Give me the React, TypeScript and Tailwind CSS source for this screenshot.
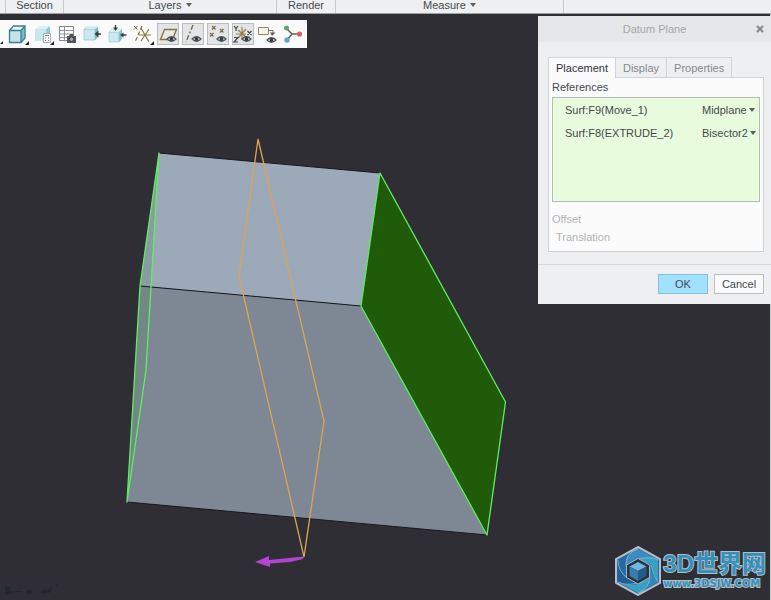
import React, { useState } from "react";
import clsx from "clsx";

const tabs = ["Placement", "Display", "Properties"];

const references = [
  { id: "ref-1", name: "Surf:F9(Move_1)", constraint: "Midplane", options: ["Midplane", "Through", "Offset", "Parallel"] },
  { id: "ref-2", name: "Surf:F8(EXTRUDE_2)", constraint: "Bisector2", options: ["Bisector1", "Bisector2"] },
];

function Caret() {
  return (
    <svg viewBox="0 0 6 4" className="pointer-events-none h-1 w-1.5 shrink-0" aria-hidden="true">
      <path d="M0 0h6L3 4z" fill="#5b5f63" />
    </svg>
  );
}

function RibbonGroup({ label, menu, className }: { label: string; menu?: boolean; className: string }) {
  return (
    <button type="button" className={clsx("flex h-full items-center justify-center gap-1 border-r border-[#c6c8cb] pb-1", className)}>
      {label}
      {menu && <Caret />}
    </button>
  );
}

function Eye({ x = 10, y = 13 }: { x?: number; y?: number }) {
  return (
    <g transform={`translate(${x} ${y})`}>
      <path d="M0 3Q4.500 -1.500 9 3Q4.500 7.500 0 3z" fill="#d9dcdd" stroke="#50565a" strokeWidth="1.200" />
      <circle cx="4.500" cy="3" r="1.900" fill="#33393d" />
    </g>
  );
}

function MenuTick() {
  return <path d="M22 18v4h-4z" fill="#222" />;
}

const tools = [
  {
    label: "Display style",
    art: (
      <>
        <path d="M14 7.500L18 3v12l-4 4.500z" fill="#75bdcb" />
        <path d="M2.500 7.500H14v12H2.500z" fill="#c4e4ea" />
        <path d="M2.500 7.500L6.500 3H18l-4 4.500z" fill="#e6f6f8" />
        <path d="M2.500 7.500H14v12H2.500zM2.500 7.500L6.500 3H18v12l-4 4.500M14 7.500L18 3" fill="none" stroke="#37808d" strokeWidth="1.300" />
        <MenuTick />
      </>
    ),
  },
  {
    label: "Saved orientations",
    art: (
      <>
        <path d="M14 6l4-3v11l-4 4z" fill="#90cad4" />
        <path d="M3 6h11v12H3z" fill="#c8e8ed" />
        <path d="M3 6l4-3h11l-4 3z" fill="#def2f5" />
        <path d="M11.500 10.500h7v9h-7z" fill="#fafafa" stroke="#92989c" strokeWidth=".8" />
        <path d="M13 12.500h4M13 15h1M16 15h1M13 17.500h1M16 17.500h1" stroke="#777d81" />
        <MenuTick />
      </>
    ),
  },
  {
    label: "View manager",
    art: (
      <>
        <path d="M2.500 3.500h14v14h-14z" fill="#fff" stroke="#82888b" />
        <path d="M2.500 7.500h14M2.500 11h14M2.500 14.500h14M7.500 3.500v14" stroke="#8f9497" fill="none" />
        <path d="M10 13h2l1-2h3l1 2h2v7h-9z" fill="#53585c" />
        <circle cx="14.500" cy="16.200" r="2.300" fill="#9da3a7" stroke="#202326" strokeWidth=".7" />
      </>
    ),
  },
  {
    label: "Refit section",
    art: (
      <>
        <path d="M13 6l3-2v10l-3 3z" fill="#79bcc8" />
        <path d="M2 6h11v11H2z" fill="#cbe9ee" stroke="#8dc5cf" strokeWidth=".7" />
        <path d="M2 6l3-2h11l-3 2z" fill="#e6f6f8" stroke="#8dc5cf" strokeWidth=".5" />
        <path d="M19 11h-4" fill="none" stroke="#3a3f42" strokeWidth="1.500" />
        <path d="M16.500 7.500v7L12.500 11z" fill="#3a3f42" />
      </>
    ),
  },
  {
    label: "Clip view",
    art: (
      <>
        <path d="M12 9l3-3v10l-3 3z" fill="#82c4cf" />
        <path d="M2 9h10v10H2z" fill="#cbe9ee" stroke="#97ccd5" strokeWidth=".7" />
        <path d="M2 9l3-3h10l-3 3z" fill="#e6f6f8" stroke="#97ccd5" strokeWidth=".5" />
        <path d="M8.500 2v3M19.500 12h-4" fill="none" stroke="#3a3f42" strokeWidth="1.300" />
        <path d="M6 4.500h5L8.500 8zM16.500 9.500v5L13 12z" fill="#3a3f42" />
      </>
    ),
  },
  {
    label: "Datum display filters",
    art: (
      <>
        <path d="M2 3l3.500 3.500M5.500 3L2 6.500" fill="none" stroke="#80704a" />
        <path d="M10 3L3 19" fill="none" stroke="#80704a" strokeWidth="1.200" strokeDasharray="4 2" />
        <path d="M7 12h12M9 5l8 14M17 6L9 18" fill="none" stroke="#8c7a4b" strokeWidth="1.200" />
        <MenuTick />
      </>
    ),
  },
  {
    label: "Plane display",
    pressed: true,
    art: (
      <>
        <path d="M7.500 6.500h12l-4 10h-12z" fill="#e9e7df" stroke="#84744e" strokeWidth="1.400" />
        <Eye />
      </>
    ),
  },
  {
    label: "Axis display",
    pressed: true,
    art: (
      <>
        <path d="M11 2L4 19" fill="none" stroke="#736a50" strokeWidth="1.400" strokeDasharray="5 2 2 2" />
        <Eye />
      </>
    ),
  },
  {
    label: "Point display",
    pressed: true,
    art: (
      <>
        <path d="M5 3l3.500 3.500M8.500 3L5 6.500M13 6l3.500 3.500M16.500 6L13 9.500M3 10l3.500 3.500M6.500 10L3 13.500" fill="none" stroke="#7c6b47" strokeWidth="1.200" />
        <Eye />
      </>
    ),
  },
  {
    label: "Coordinate system display",
    pressed: true,
    art: (
      <>
        <path d="M4 11h10M10 4v13M6 7l9 8M14 6l-8 9" fill="none" stroke="#967f4c" strokeWidth="1.200" />
        <path d="M2 3l2 2.500L6 3M4 5.500V8M15.500 8l4 4M19.500 8l-4 4M2 14.500h4L2 19h4" fill="none" stroke="#454a4d" strokeWidth="1.200" />
        <Eye />
      </>
    ),
  },
  {
    label: "Annotation display",
    art: (
      <>
        <path d="M1.500 4.500h10v7h-10z" fill="#faf5e4" stroke="#8d8672" />
        <path d="M11.500 7.500h4.500V10" fill="none" stroke="#6d7275" />
        <path d="M13 9.500h5.500l-3.500 3.500z" fill="#5b6063" />
        <Eye x={10} y={14} />
      </>
    ),
  },
  {
    label: "Spin center",
    art: (
      <>
        <path d="M4 5l6 6h8M10 11l-5 6" fill="none" stroke="#66634f" strokeWidth="1.500" />
        <circle cx="4.500" cy="5" r="2.500" fill="#5fa274" />
        <circle cx="17.500" cy="11" r="2.600" fill="#cf6263" />
        <circle cx="5" cy="17" r="2.700" fill="#62a5cc" />
      </>
    ),
  },
];

function Toolbar() {
  return (
    <div role="toolbar" aria-label="View tools" className="absolute top-1.5 left-0 flex h-7 items-center gap-[3px] bg-[#fafafa] pr-[3px] pl-[7px]">
      <svg viewBox="0 0 4 4" className="absolute bottom-1 left-0 h-[3px] w-[3px]" aria-hidden="true">
        <path d="M4 0v4H0z" fill="#222" />
      </svg>
      {tools.map((tool) => (
        <button
          key={tool.label}
          type="button"
          aria-label={tool.label}
          aria-pressed={tool.pressed}
          className={clsx("flex size-[22px] items-center justify-center", tool.pressed && "bg-[#e3e4e6] outline-1 -outline-offset-1 outline-[#babdc0]")}
        >
          <svg viewBox="0 0 22 22" className="size-[22px]" aria-hidden="true">
            {tool.art}
          </svg>
        </button>
      ))}
    </div>
  );
}

function Model() {
  return (
    <svg viewBox="0 0 770 586" className="w-full" role="img" aria-label="Model view">
      <path d="M159 139L380 159L361 292L140 272z" fill="#9ba9b9" />
      <path d="M140 272L361 292L487 521L127 488z" fill="#7e8894" />
      <path d="M380 159L505.500 388L487 521L361 292z" fill="#1f5b09" />
      <path d="M159 139L140 272L127 488L146 356z" fill="#62866f" fillOpacity=".35" />
      <path d="M159 139L380 159M140 272L361 292M127 488L487 521" fill="none" stroke="#16191d" />
      <path d="M159 139L140 272L127 488L146 356zM380 159L505.500 388L487 521L361 292z" fill="none" stroke="#61ed63" strokeWidth="1.300" strokeLinejoin="round" />
      <path d="M258 125L324 407L304 543L239 262z" fill="none" stroke="#dda452" strokeWidth="1.300" />
      <path d="M304 542.500L269 546V542L255 548L270 553V549.500L290 548L303 545z" fill="#b345d2" />
      <g fill="#20282f">
        <path d="M5 573l6-1-2 5 7 1-4 2-7 1z" />
        <path d="M15 577h7v1h-7zM26 577l5-2 2 3-5 3zM39 578l5-3 4 1 4-5-1 7-7 2zM55 570l3-1-1 3z" />
      </g>
    </svg>
  );
}

function DatumPlaneDialog() {
  const [tab, setTab] = useState("Placement");

  return (
    <section role="dialog" aria-label="Datum Plane" className="absolute top-0.5 -right-px w-[233px] bg-[#eeeff1] pb-2.5">
      <header className="flex h-[26px] items-center bg-[#e6e7e8] pr-1.5 pl-4">
        <h1 className="flex-1 text-center text-[#a5a7a9]">Datum Plane</h1>
        <button type="button" aria-label="Close" className="flex size-2.5 items-center justify-center">
          <svg viewBox="0 0 8 8" className="size-2" aria-hidden="true">
            <path d="M1 1l6 6M7 1L1 7" stroke="#85888b" strokeWidth="2" />
          </svg>
        </button>
      </header>

      <div className="pt-[15px] pr-[7px] pb-3 pl-2.5">
        <div role="tablist" className="flex">
          {tabs.map((name) => (
            <button
              key={name}
              type="button"
              role="tab"
              aria-selected={tab === name}
              onClick={() => setTab(name)}
              className={clsx(
                "border-t border-r border-[#d2d4d7] px-[7px] first:border-l",
                tab === name ? "-mb-px h-[21px] bg-[#fbfbfc] text-[#303438]" : "h-5 text-[#85898d]"
              )}
            >
              {name}
            </button>
          ))}
        </div>

        <div role="tabpanel" className="border border-[#d2d4d7] bg-[#fbfbfc] px-[3px] pb-[5px]">
          <h2 className="h-[19px] leading-[19px]">References</h2>
          <ul className="h-[105px] border border-[#b5bcb3] bg-[#e8fbdc] pl-3">
            {references.map((ref) => (
              <li key={ref.id} className="flex h-[23px] items-center">
                <label htmlFor={ref.id} className="flex-1">
                  {ref.name}
                </label>
                <span className="flex w-[57px] items-center gap-0.5">
                  <select id={ref.id} defaultValue={ref.constraint} className="[field-sizing:content] appearance-none bg-transparent">
                    {ref.options.map((option) => (
                      <option key={option}>{option}</option>
                    ))}
                  </select>
                  <Caret />
                </span>
              </li>
            ))}
          </ul>
          <div className="pt-2 leading-[18px] text-[#b0b3b5]">
            <h2>Offset</h2>
            <p className="pl-1">Translation</p>
          </div>
        </div>
      </div>

      <footer className="flex justify-end gap-1.5 border-t border-[#d5d7d9] pt-[9px] pr-[7px]">
        <button type="button" className="h-5 w-[50px] border border-[#8abdd6] bg-[#9fe1ff]">
          OK
        </button>
        <button type="button" className="h-5 w-[50px] border border-[#bcbec1] bg-[#fafafa]">
          Cancel
        </button>
      </footer>
    </section>
  );
}

function Watermark() {
  return (
    <div className="absolute right-1 bottom-1 flex items-center gap-0.5">
      <svg viewBox="0 0 46 50" className="h-[50px] w-[46px]" aria-hidden="true">
        <path d="M23 1L45 13v24L23 49L1 37V13z" fill="#256ca2" stroke="#b5bcc5" strokeWidth="2" />
        <path d="M23 3q-13 4-12 17L3 14z" fill="#2b68a5" />
        <path d="M23 3l20 11q-6-4-19-1l-13 7Q10 7 23 3z" fill="#3a8dbf" />
        <path d="M43 14v22q-3-5-7-17l-12-6q13-3 19 1z" fill="#37a0c5" />
        <path d="M43 36L23 47q11-4 12-16V19q3 12 8 17z" fill="#2f88b7" />
        <path d="M3 36l20 11q11-4 12-16l-12 7Q11 40 3 36z" fill="#37a0c5" />
        <path d="M3 14v22q8 4 20 2l-12-6Q3 25 3 14z" fill="#245c98" />
        <path d="M23 3q-13 4-12 17M43 14q-6-4-19-1M43 36q-4-5-7-17M23 47q11-4 12-16M3 36q8 4 20 1M3 14q0 11 9 18" fill="none" stroke="#94bbd4" strokeWidth=".8" />
        <path d="M23 12.500l11.500 6.500v12.500L23 38l-11.500-6.500V19z" fill="#2d3036" stroke="#9eb9ca" />
        <path d="M23 16l8.500 4.500L23 25l-8.500-4.500z" fill="#70b8dd" />
        <path d="M14.500 20.500L23 25v10l-8.500-5z" fill="#347dad" />
        <path d="M31.500 20.500L23 25v10l8.500-5z" fill="#245c88" />
      </svg>
      <div className="pb-0.5 text-[#3190bc] [-webkit-text-stroke:2px_#b3bec7] [paint-order:stroke_fill]">
        <p className="font-['Liberation_Sans','Noto_Sans_CJK_SC',sans-serif] text-[24px] leading-7 font-bold">3D世界网</p>
        <p className="font-['DejaVu_Sans',sans-serif] text-[10px] leading-3 font-bold">www.3DSJW.COM</p>
      </div>
    </div>
  );
}

export default function App() {
  return (
    <main className="flex min-h-screen flex-col border-r border-[#c9cbce] bg-[#2f2e34] font-['Liberation_Sans',Arial,sans-serif] text-[11px] leading-4 text-[#45494d]">
      <nav aria-label="Ribbon groups" className="-mr-px flex h-3.5 items-center overflow-hidden border-b border-[#a0a2a5] bg-[#eff0f2] pl-[5px]">
        <RibbonGroup label="Section" className="w-[59px] border-l" />
        <RibbonGroup label="Layers" menu className="w-[213px]" />
        <RibbonGroup label="Render" className="w-[59px]" />
        <RibbonGroup label="Measure" menu className="w-[228px]" />
      </nav>
      <div className="relative flex-1">
        <Model />
        <Toolbar />
        <DatumPlaneDialog />
        <Watermark />
      </div>
    </main>
  );
}
